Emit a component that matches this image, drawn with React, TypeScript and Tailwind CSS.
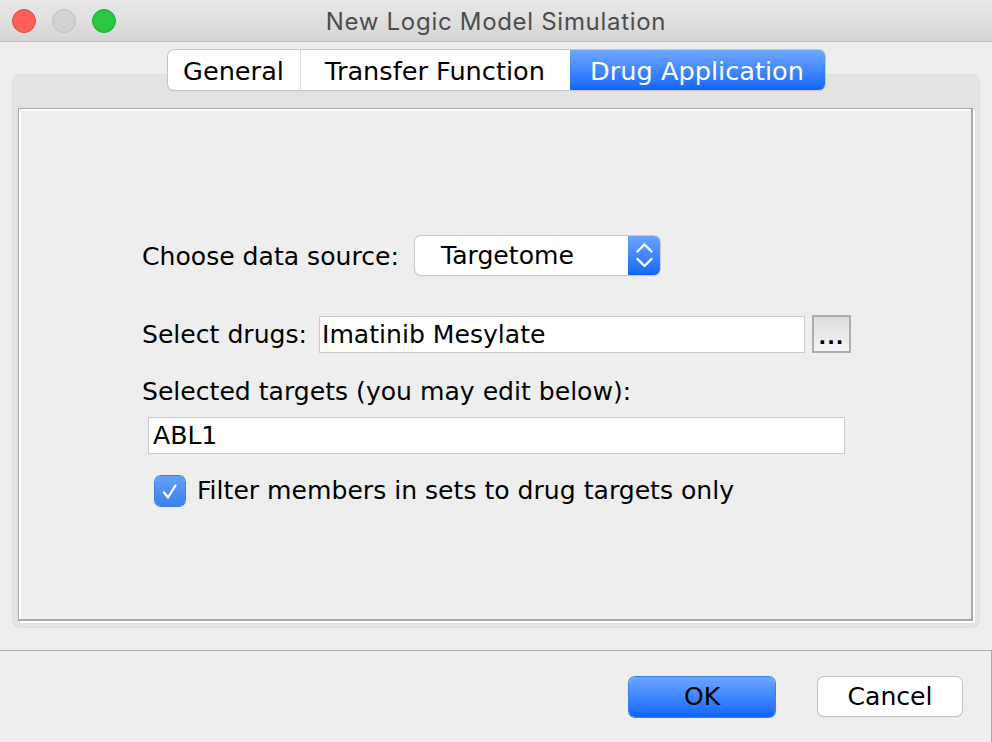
const TrafficLight = ({ fill, edge }: { fill: string; edge: string }) => (
  <span className={`block w-[24px] h-[24px] rounded-full border ${fill} ${edge}`} />
);

export default function App() {
  return (
    <div className="w-[992px] h-[742px] bg-[#eeeeee] flex flex-col overflow-hidden font-['DejaVu_Sans',sans-serif] text-black">
      {/* title bar */}
      <div className="h-[42px] shrink-0 grid grid-cols-[1fr_auto_1fr] items-center border-b border-[#bdbdbd] bg-linear-to-b from-[#e9e9e9] to-[#d5d5d5]">
        <div className="flex gap-[16px] pl-[12px]">
          <TrafficLight fill="bg-[#fe5f57]" edge="border-[#e2463f]" />
          <TrafficLight fill="bg-[#d2d2d2]" edge="border-[#c0c0c0]" />
          <TrafficLight fill="bg-[#28c840]" edge="border-[#1dad2b]" />
        </div>
        <div className="font-['Inter',sans-serif] text-[24px] tracking-[0.7px] text-[#4d4d4d] leading-none pt-[2px]">
          New Logic Model Simulation
        </div>
        <div />
      </div>

      <div className="pt-[8px] flex flex-col shrink-0">
        {/* tabs */}
        <div className="flex justify-center relative z-10">
          <div className="flex h-[40px] rounded-[6px] bg-white shadow-[0_0_0_1px_#c6c6c6,0_1px_1px_rgba(0,0,0,0.18)] overflow-hidden text-[25.6px] leading-none">
            <div className="w-[133px] flex items-center justify-center pt-[3px] border-r border-[#dcdcdc]">General</div>
            <div className="w-[269px] flex items-center justify-center pt-[3px]">Transfer Function</div>
            <div className="w-[255px] flex items-center justify-center pt-[3px] text-white bg-linear-to-b from-[#6ca7fc] to-[#0e65fb]">
              Drug Application
            </div>
          </div>
        </div>

        {/* tab pane */}
        <div className="-mt-[16px] mx-[12px] h-[554px] rounded-[8px] bg-[#e3e3e3] border border-[#dddddd] pt-[33px] pl-[5px] pr-[6px] pb-[6px] flex">
          <div className="flex-1 bg-[#eeeeee] border-t border-l border-b-2 border-r-2 border-[#a9a9a9] shadow-[inset_2px_2px_0_#ffffff,2px_2px_0_#ffffff] pt-[127px] pl-[123px] text-[25.1px] leading-none">
            <div className="flex items-center h-[39px]">
              <span className="w-[273px] pt-[2px]">Choose data source:</span>
              <div className="w-[245px] h-[39px] flex rounded-[6px] bg-white shadow-[0_0_0_1px_#cacaca,0_1px_1px_rgba(0,0,0,0.2)] overflow-hidden">
                <div className="flex-1 pl-[26px] flex items-center">Targetome</div>
                <div className="w-[32px] bg-linear-to-b from-[#6aa5fc] to-[#0d65fb]">
                  <svg width="32" height="39" viewBox="0 0 32 39" fill="none" stroke="#ffffff" strokeWidth="2.4" strokeLinecap="round" strokeLinejoin="round">
                    <path d="M9.5 15.5 L16.5 8.5 L23.5 15.5" />
                    <path d="M9.5 23 L16.5 30 L23.5 23" />
                  </svg>
                </div>
              </div>
            </div>

            <div className="flex items-center h-[38px] mt-[40px]">
              <span className="w-[177px] pt-[1px]">Select drugs:</span>
              <input
                readOnly
                defaultValue="Imatinib Mesylate"
                className="w-[486px] h-[37px] bg-white border border-[#cbcbcb] pl-[2px] pt-[1px] outline-none"
              />
              <button className="ml-[7px] w-[39px] h-[38px] border-2 border-[#adadad] bg-linear-to-b from-[#dddddd] to-[#f5f5f5] text-[20px] font-bold tracking-[1px] pt-[6px]">
                ...
              </button>
            </div>

            <div className="h-[30px] mt-[23px] pt-[2px] flex items-center">Selected targets (you may edit below):</div>

            <input
              readOnly
              defaultValue="ABL1"
              className="block ml-[6px] mt-[11px] w-[697px] h-[37px] bg-white border border-[#cbcbcb] pl-[4px] outline-none"
            />

            <label className="flex items-center h-[30px] mt-[22px] ml-[13px] gap-[12px]">
              <span className="w-[30px] h-[30px] rounded-[6px] bg-linear-to-b from-[#63a0f6] to-[#3a80ef] shadow-[0_0_0_1px_#3f7fe0]">
                <svg width="30" height="30" viewBox="0 0 30 30" fill="none" stroke="#ffffff" strokeWidth="2.3" strokeLinecap="round" strokeLinejoin="round">
                  <path d="M9 16.5 L13 21.5 L20.5 9.5" />
                </svg>
              </span>
              <span>Filter members in sets to drug targets only</span>
            </label>
          </div>
        </div>
      </div>

      {/* buttons */}
      <div className="mt-[22px] flex-1 border-t border-r border-[#adadad] flex justify-end items-start gap-[43px] pr-[29px] pt-[26px] text-[25.1px] leading-none">
        <button className="w-[146px] h-[40px] rounded-[6px] bg-linear-to-b from-[#6aa6fc] to-[#0b64fb] shadow-[0_0_0_1px_#3d7fe8]">
          OK
        </button>
        <button className="w-[144px] h-[39px] rounded-[6px] bg-white shadow-[0_0_0_1px_#c4c4c4,0_1px_1px_rgba(0,0,0,0.2)]">
          Cancel
        </button>
      </div>
    </div>
  );
}
